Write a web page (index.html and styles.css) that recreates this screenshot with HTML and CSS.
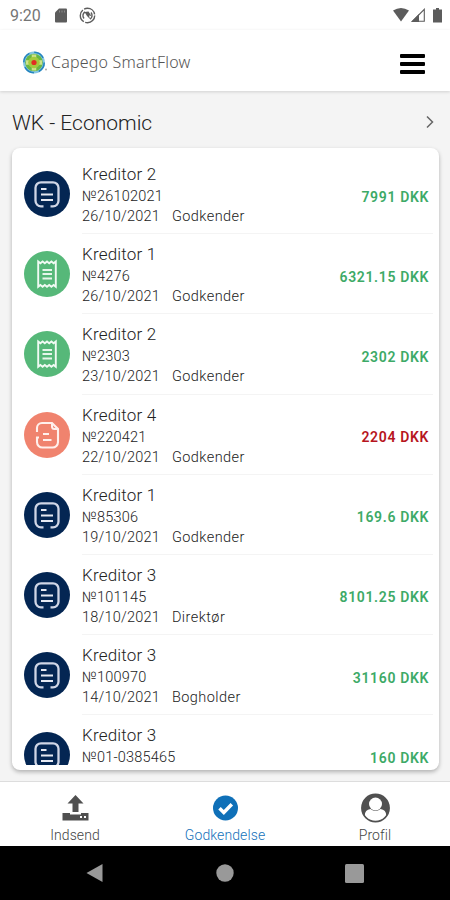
FILE: index.html
```
<!DOCTYPE html>
<html lang="da">
<head>
    <meta charset="UTF-8">
    <meta name="viewport" content="width=device-width, initial-scale=1.0">
    <title>Capego SmartFlow</title>
    <link rel="stylesheet" href="styles.css">
</head>
<body>
    <!-- Shared icons -->
    <svg class="sprite" aria-hidden="true">
        <symbol id="icon-invoice" viewBox="0 0 46 46">
            <path d="M19.500 35.300h-2.500a5.500 5.500 0 0 1-5.500-5.500v-13a5.500 5.500 0 0 1 5.500-5.500h12a5.500 5.500 0 0 1 5.500 5.500v13a5.500 5.500 0 0 1-5.500 5.500h-2.500" fill="none" stroke="#d0d6e6" stroke-width="2.300"/>
            <path d="M17 18h5.500M17 23.500h12M17 29h12" fill="none" stroke="#e6e9f2" stroke-width="2.200"/>
        </symbol>
        <symbol id="icon-receipt" viewBox="0 0 46 46">
            <path d="M14.200 10.500l2.200 1.800 2.200-1.800 2.200 1.800 2.200-1.800 2.200 1.800 2.200-1.800 2.200 1.800 2.200-1.800v25.200l-2.200-1.800-2.200 1.800-2.200-1.800-2.200 1.800-2.200-1.800-2.200 1.800-2.200-1.800-2.200 1.800z" fill="none" stroke="#f0faf3" stroke-width="1.900"/>
            <path d="M18.500 19h9.500M18.500 23h9.500M18.500 27.500h9.500" fill="none" stroke="#e6f6eb" stroke-width="1.900"/>
        </symbol>
        <symbol id="icon-note" viewBox="0 0 46 46">
            <path d="M13 20v-4a5 5 0 0 1 5-5h10l6 6v13a5.500 5.500 0 0 1-5.500 5.500h-10a5.500 5.500 0 0 1-5.500-5.500v-4.500h2" fill="none" stroke="#fff0ec" stroke-width="2.100"/>
            <path d="M28 11v3.500a2.500 2.500 0 0 0 2.500 2.500h3.500M19 22h6M19 28h8.500" fill="none" stroke="#fff0ec" stroke-width="2"/>
        </symbol>
    </svg>

    <div class="status-bar">
        <span class="time">9:20</span>
        <svg class="sd-card" width="12" height="15" viewBox="0 0 12 15"><path d="M4 .500h7q1 0 1 1v12q0 1-1 1h-10q-1 0-1-1v-9z" fill="#5c5c5c"/><path d="M4.500 2.500v2M7 2.500v2M9.500 2.500v2" stroke="#888"/></svg>
        <svg class="sync" width="17" height="17" viewBox="0 0 17 17" fill="none" stroke="#5c5c5c">
            <circle cx="8.500" cy="8.500" r="7.200" stroke-width="1.400" stroke-dasharray="13.600 1.500"/>
            <path d="M5 11.500a4.500 4.500 0 0 1 1-6.700M12 5.500a4.500 4.500 0 0 1-1 6.700" stroke-width="1.400"/>
            <path d="M5.500 5l4-.5 3 4.500-2.500-.5 1 3.500-3-3z" fill="#5c5c5c" stroke="none"/>
        </svg>
        <div class="signals">
            <svg width="16" height="14" viewBox="0 0 16 14"><path d="M0 2.500q8-5 16 0l-8 11z" fill="#5c5c5c"/></svg>
            <svg width="14" height="14" viewBox="0 0 14 14"><path d="M1.500 13.300h11.800v-12z" fill="none" stroke="#5c5c5c" stroke-width="1.100"/><path d="M0 14h8v-8z" fill="#5c5c5c"/></svg>
            <svg class="battery" width="9" height="15" viewBox="0 0 9 15"><path d="M3 0h3v1.500h3v13h-9v-13h3z" fill="#5c5c5c"/></svg>
        </div>
    </div>

    <header class="app-header">
        <svg class="logo" width="25" height="24" viewBox="0 0 25 24">
            <circle cx="11" cy="11.500" r="10.900" fill="#85c6e2"/>
            <circle cx="11" cy="11.500" r="10.200" fill="none" stroke="#2584bf" stroke-width="1.600" stroke-dasharray="11 5"/>
            <circle cx="11" cy="11.500" r="8.800" fill="#69b743"/>
            <path d="M11 3.500v16M3 11.500h16" stroke="#cce18a" stroke-width="4.500"/>
            <circle cx="11" cy="11.500" r="5.800" fill="#a3ca3d"/>
            <circle cx="11" cy="11.500" r="2.600" fill="#e22d22"/>
            <circle cx="23" cy="18.500" r="1" fill="#aaa"/>
        </svg>
        <span class="brand">Capego SmartFlow</span>
        <div class="menu"><i></i><i></i><i></i></div>
    </header>

    <main>
        <div class="section-title">
            <h1>WK - Economic</h1>
            <svg width="8" height="14" viewBox="0 0 8 14"><path d="M1 1.500l5.500 5.500-5.500 5.500" fill="none" stroke="#666" stroke-width="1.500"/></svg>
        </div>

        <div class="card">
            <ul class="list">
                <li>
                    <svg class="badge navy"><use href="#icon-invoice"/></svg>
                    <div class="entry">
                        <div class="info"><h2>Kreditor 2</h2><p>№26102021</p><p class="meta"><span>26/10/2021</span><span>Godkender</span></p></div>
                        <span class="amount">7991 DKK</span>
                    </div>
                </li>
                <li>
                    <svg class="badge green"><use href="#icon-receipt"/></svg>
                    <div class="entry">
                        <div class="info"><h2>Kreditor 1</h2><p>№4276</p><p class="meta"><span>26/10/2021</span><span>Godkender</span></p></div>
                        <span class="amount">6321.15 DKK</span>
                    </div>
                </li>
                <li>
                    <svg class="badge green"><use href="#icon-receipt"/></svg>
                    <div class="entry">
                        <div class="info"><h2>Kreditor 2</h2><p>№2303</p><p class="meta"><span>23/10/2021</span><span>Godkender</span></p></div>
                        <span class="amount">2302 DKK</span>
                    </div>
                </li>
                <li>
                    <svg class="badge coral"><use href="#icon-note"/></svg>
                    <div class="entry">
                        <div class="info"><h2>Kreditor 4</h2><p>№220421</p><p class="meta"><span>22/10/2021</span><span>Godkender</span></p></div>
                        <span class="amount negative">2204 DKK</span>
                    </div>
                </li>
                <li>
                    <svg class="badge navy"><use href="#icon-invoice"/></svg>
                    <div class="entry">
                        <div class="info"><h2>Kreditor 1</h2><p>№85306</p><p class="meta"><span>19/10/2021</span><span>Godkender</span></p></div>
                        <span class="amount">169.6 DKK</span>
                    </div>
                </li>
                <li>
                    <svg class="badge navy"><use href="#icon-invoice"/></svg>
                    <div class="entry">
                        <div class="info"><h2>Kreditor 3</h2><p>№101145</p><p class="meta"><span>18/10/2021</span><span>Direktør</span></p></div>
                        <span class="amount">8101.25 DKK</span>
                    </div>
                </li>
                <li>
                    <svg class="badge navy"><use href="#icon-invoice"/></svg>
                    <div class="entry">
                        <div class="info"><h2>Kreditor 3</h2><p>№100970</p><p class="meta"><span>14/10/2021</span><span>Bogholder</span></p></div>
                        <span class="amount">31160 DKK</span>
                    </div>
                </li>
                <li>
                    <svg class="badge navy"><use href="#icon-invoice"/></svg>
                    <div class="entry">
                        <div class="info"><h2>Kreditor 3</h2><p>№01-0385465</p></div>
                        <span class="amount">160 DKK</span>
                    </div>
                </li>
            </ul>
        </div>
    </main>

    <nav class="tabs">
        <a class="tab">
            <svg width="30" height="30" viewBox="0 0 30 30"><path d="M15.500 2l8 8.500h-5v8.500h-6v-8.500h-5z" fill="#505050"/><path d="M2.500 20h7.500v1.500h11v-1.500h7.500v7.500h-26z" fill="#505050"/><path d="M20 24h2M24 24h2" stroke="#fff" stroke-width="2"/></svg>
            <span>Indsend</span>
        </a>
        <a class="tab active">
            <svg width="30" height="30" viewBox="0 0 30 30"><circle cx="15.500" cy="15" r="12.500" fill="#0f70b8"/><path d="M9.500 15.300l4.300 4.200 8-8.200" fill="none" stroke="#fff" stroke-width="3.500"/></svg>
            <span>Godkendelse</span>
        </a>
        <a class="tab">
            <svg width="30" height="30" viewBox="0 0 30 30"><circle cx="15.500" cy="15" r="13.600" fill="#fff" stroke="#505050" stroke-width="1.600"/><path d="M15.500 1.400a13.600 13.600 0 0 0-10.700 22q-.5-6.500 5.700-7.400 5 4 10 0 6.200.9 5.700 7.400a13.600 13.600 0 0 0-10.700-22z" fill="#505050"/><circle cx="15.500" cy="11" r="6.500" fill="#fff"/></svg>
            <span>Profil</span>
        </a>
    </nav>

    <div class="system-nav">
        <svg width="18" height="20" viewBox="0 0 18 20"><path d="M16.500 1v18l-16-9z" fill="#999"/></svg>
        <svg width="18" height="18" viewBox="0 0 18 18"><circle cx="9" cy="9" r="8.700" fill="#999"/></svg>
        <svg width="19" height="19" viewBox="0 0 19 19"><rect width="19" height="19" rx="1.500" fill="#999"/></svg>
    </div>
</body>
</html>
```
FILE: styles.css
```
* {
    box-sizing: border-box;
}
body {
    display: flex;
    flex-direction: column;
    height: 900px;
    margin: 0;
    overflow: hidden;
    font-family: Roboto, sans-serif;
    font-weight: 300;
    background-color: #f4f4f4;
    color: #222;
}
svg {
    display: block;
    flex-shrink: 0;
}
h1, h2, p, ul {
    margin: 0;
    padding: 0;
    font-weight: 300;
}
.sprite {
    position: absolute;
    width: 0;
    height: 0;
}

/* Top of the screen */
.status-bar {
    display: flex;
    align-items: center;
    height: 30px;
    padding: 0 8px 0 10px;
    background-color: #fff;
}
.time {
    width: 45px;
    font-size: 16px;
    font-weight: 400;
    color: #757575;
}
.sync {
    margin-left: 12px;
}
.signals {
    display: flex;
    align-items: center;
    gap: 2px;
    margin-left: auto;
}
.battery {
    margin-left: 6px;
}
.app-header {
    display: flex;
    align-items: center;
    height: 61px;
    padding: 4px 25px 0 23px;
    background-color: #fff;
    box-shadow: 0 1px 3px rgba(0, 0, 0, 0.15);
}
.brand {
    margin: -2px 0 0 3px;
    font-family: "Noto Sans", sans-serif;
    font-size: 16px;
    letter-spacing: 0.2px;
    color: #555;
}
.menu {
    display: flex;
    flex-direction: column;
    gap: 4px;
    width: 25px;
    margin: 2px 0 0 auto;
}
.menu i {
    height: 4px;
    border-radius: 1px;
    background-color: #000;
}

/* Company and its invoices */
main {
    height: 690px;
    padding: 0 11px 0 12px;
}
.section-title {
    display: flex;
    align-items: center;
    justify-content: space-between;
    height: 57px;
    padding: 6px 5px 0 0;
}
.section-title h1 {
    font-size: 21px;
    font-weight: 300;
}
.section-title svg {
    margin-bottom: 1px;
}
.card {
    height: 622px;
    padding: 6px 6px 5px 12px;
    border-radius: 8px;
    background-color: #fff;
    box-shadow: 0 2px 4px rgba(0, 0, 0, 0.28);
}
.list {
    height: 611px;
    overflow: hidden;
    list-style: none;
}
.list li {
    display: flex;
    align-items: center;
    gap: 12px;
    height: 80.200px;
}
.badge {
    width: 46px;
    height: 46px;
    border-radius: 50%;
}
.navy {
    background-color: #042653;
}
.green {
    background-color: #56b879;
}
.coral {
    background-color: #f0836e;
}
.entry {
    display: flex;
    flex: 1;
    justify-content: space-between;
    height: 100%;
    border-bottom: 1px solid #f4f4f4;
}
.info {
    padding-top: 8px;
}
.info h2 {
    font-size: 17px;
    line-height: 24px;
    letter-spacing: 0.2px;
}
.info p {
    margin-top: 4px;
    font-size: 14.500px;
    line-height: 14px;
    letter-spacing: 0.2px;
}
.info .meta {
    display: flex;
    gap: 12px;
    margin-top: 6px;
}
.meta span + span {
    letter-spacing: 0.45px;
}
.amount {
    padding: 35.500px 4px 0 0;
    font-size: 14px;
    font-weight: 600;
    line-height: 14px;
    letter-spacing: 0.65px;
    color: #3daa67;
}
.negative {
    color: #b71520;
}

/* Bottom navigation */
.tabs {
    display: flex;
    height: 65px;
    border-top: 1px solid #ddd;
    background-color: #fff;
}
.tab {
    display: flex;
    flex: 1;
    flex-direction: column;
    align-items: center;
    padding-top: 11px;
    font-size: 14px;
    line-height: 24px;
    letter-spacing: 0.1px;
    color: #444;
}
.active {
    color: #1471ba;
}
.system-nav {
    display: flex;
    flex: 1;
    align-items: center;
    justify-content: space-between;
    padding: 0 86px;
    background-color: #000;
}
```
